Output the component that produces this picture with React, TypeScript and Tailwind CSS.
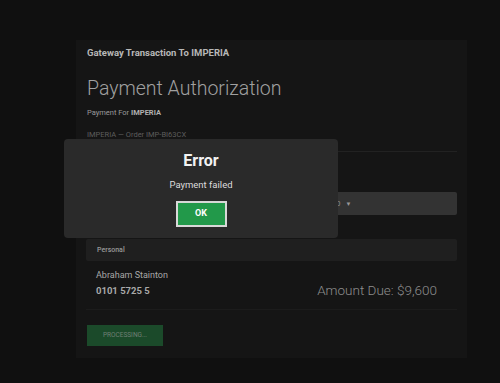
export default function App() {
  return (
    <div className="relative w-[500px] h-[383px] bg-[#101010] overflow-hidden" style={{ fontFamily: "Roboto, 'Liberation Sans', sans-serif" }}>
      {/* Card */}
      <div className="absolute left-[76px] top-[40px] w-[391px] h-[318px] bg-[#151515] pl-[11px] pr-[10px]">
        <div className="pt-[7px] text-[9.5px] font-bold text-[#b8b8b8] leading-[12px]">Gateway Transaction To IMPERIA</div>
        <div className="mt-[18px] text-[19.5px] font-light text-[#a0a0a0] leading-[23px]">Payment Authorization</div>
        <div className="mt-[8px] text-[7.5px] text-[#9a9a9a] leading-[10px]">
          Payment For <span className="font-bold text-[#b0b0b0]">IMPERIA</span>
        </div>
        <div className="mt-[12px] text-[7.5px] text-[#5e5e5e] leading-[10px]">IMPERIA — Order IMP-BI63CX</div>
        <div className="mt-[11px] -ml-[1px] h-px bg-[#222]" />

        <div className="mt-[40px] -ml-[1px] h-[23px] bg-[#333] rounded-[2px] flex items-center pl-[250px] gap-[5px]">
          <span className="text-[8px] text-[#888]">0</span>
          <span className="text-[6px] text-[#999]">▼</span>
        </div>

        <div className="mt-[24px] -ml-[1px] h-[22px] bg-[#1f1f1f] rounded-[2px] flex items-center pl-[11px]">
          <span className="text-[7px] font-medium text-[#9a9a9a]">Personal</span>
        </div>

        <div className="flex items-end justify-between pl-[10px] pr-[20px] pt-[8px] pb-[12px] border-b border-[#1c1c1c] -ml-[1px]">
          <div>
            <div className="text-[9px] text-[#a8a8a8] leading-[12px]">Abraham Stainton</div>
            <div className="mt-[4px] text-[9.5px] font-bold text-[#a8a8a8] leading-[12px]">0101 5725 5</div>
          </div>
          <div className="text-[13.5px] font-light text-[#8e8e8e] leading-[16px] -mb-[1px]">Amount Due: $9,600</div>
        </div>

        <div className="mt-[15px] w-[76px] h-[21px] bg-[#1b4a2a] flex items-center justify-center">
          <span className="text-[6.5px] text-[#6f7f74]">PROCESSING...</span>
        </div>
      </div>

      {/* Error dialog */}
      <div className="absolute left-[64px] top-[139px] w-[274px] h-[99px] bg-[#2a2a2a] rounded-[4px] flex flex-col items-center">
        <div className="mt-[13px] text-[16px] font-bold text-[#f2f2f2] leading-[18px]">Error</div>
        <div className="mt-[9px] text-[9.5px] text-[#dcdcdc] leading-[12px]">Payment failed</div>
        <div className="mt-[10px] w-[51px] h-[26px] bg-[#22994a] border-2 border-[#d8d8d8] flex items-center justify-center">
          <span className="text-[9px] font-bold text-white">OK</span>
        </div>
      </div>
    </div>
  )
}
